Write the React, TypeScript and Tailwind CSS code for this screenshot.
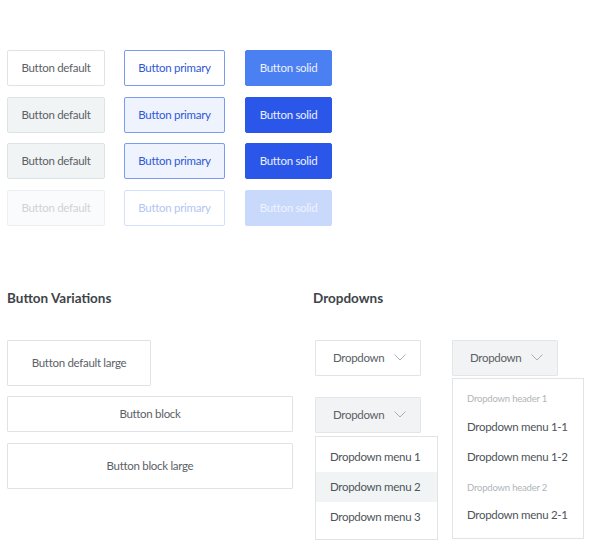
import React from 'react';

const font = { fontFamily: 'Lato, "Noto Sans", sans-serif' };

const Chevron = () => (
  <svg width="12" height="7" viewBox="0 0 12 7" fill="none" className="shrink-0">
    <path d="M0.5 0.5L6 6L11.5 0.5" stroke="#a9afb4" strokeWidth="1" />
  </svg>
);

const txt = 'text-[11.5px] tracking-[-0.3px] whitespace-nowrap';
const btnBase = `h-[36px] rounded-[2px] border flex items-center justify-center ${txt}`;

const rows = [
  {
    def: 'bg-white border-[#dfe3e6] text-[#5b6166]',
    pri: 'bg-white border-[#7b9bef] text-[#2f58d6]',
    sol: 'bg-[#4a80f2] border-[#4a80f2] text-[#eaf0fe]',
  },
  {
    def: 'bg-[#f1f4f5] border-[#dde2e5] text-[#5b6166]',
    pri: 'bg-[#eef3fd] border-[#7b9bef] text-[#2f58d6]',
    sol: 'bg-[#2a57e9] border-[#2a57e9] text-[#eaf0fe]',
  },
  {
    def: 'bg-[#f1f4f5] border-[#dde2e5] text-[#5b6166]',
    pri: 'bg-[#eef3fd] border-[#7b9bef] text-[#2f58d6]',
    sol: 'bg-[#2a57e9] border-[#2a57e9] text-[#eaf0fe]',
  },
  {
    def: 'bg-[#fafbfc] border-[#eceff1] text-[#cfd4d8]',
    pri: 'bg-white border-[#d3e0fb] text-[#b3c6f5]',
    sol: 'bg-[#c9d9fb] border-[#c9d9fb] text-[#eef3fe]',
  },
];

const Dropdown = ({ gray }: { gray?: boolean }) => (
  <div
    className={`w-[106px] h-[36px] border rounded-[1px] flex items-center pl-[17px] pr-[14px] justify-between text-[#5b6166] ${txt} ${
      gray ? 'bg-[#f1f3f4] border-[#e3e6e8]' : 'bg-white border-[#e1e4e6]'
    }`}
  >
    <span>Dropdown</span>
    <Chevron />
  </div>
);

const item = `flex items-center px-[14px] ${txt}`;
const header = 'flex items-center px-[14px] text-[9.5px] tracking-[-0.2px] text-[#b0b5b9] whitespace-nowrap';

export default function App() {
  return (
    <div className="w-[592px] h-[544px] bg-white overflow-hidden pl-[7px] pt-[50px]" style={font}>
      {/* button states grid */}
      <div className="flex flex-col gap-[10.5px]">
        {rows.map((r, i) => (
          <div key={i} className="flex">
            <div className={`${btnBase} w-[98px] ${r.def}`}>Button default</div>
            <div className={`${btnBase} w-[101px] ml-[19px] ${r.pri}`}>Button primary</div>
            <div className={`${btnBase} w-[87px] ml-[20px] ${r.sol}`}>Button solid</div>
          </div>
        ))}
      </div>

      <div className="flex mt-[64px]">
        {/* Button variations */}
        <div className="w-[286px] shrink-0 flex flex-col">
          <h2 className="text-[13.5px] font-bold text-[#3e4449] leading-[16px] h-[16px]">Button Variations</h2>
          <div className="mt-[34px] flex flex-col gap-[10.5px] text-[#5b6166]">
            <div className={`w-[144px] h-[46px] border border-[#dfe3e6] rounded-[1px] flex items-center justify-center ${txt}`}>
              Button default large
            </div>
            <div className={`h-[36px] border border-[#dfe3e6] rounded-[1px] flex items-center justify-center ${txt}`}>
              Button block
            </div>
            <div className={`h-[46px] border border-[#dfe3e6] rounded-[1px] flex items-center justify-center ${txt}`}>
              Button block large
            </div>
          </div>
        </div>

        {/* Dropdowns */}
        <div className="ml-[20px] shrink-0 flex flex-col">
          <h2 className="text-[13.5px] font-bold text-[#3e4449] leading-[16px] h-[16px]">Dropdowns</h2>
          <div className="mt-[34px] ml-[2px] flex gap-[14px]">
            <div className="flex flex-col">
              <Dropdown />
              <div className="mt-[21px]">
                <Dropdown gray />
              </div>
              <div className="mt-[3px] w-[123px] border border-[#e1e4e6] bg-white pt-[5px] pb-[7px] text-[#4e5459]">
                <div className={`${item} h-[30px]`}>Dropdown menu 1</div>
                <div className={`${item} h-[30px] bg-[#f1f4f5]`}>Dropdown menu 2</div>
                <div className={`${item} h-[30px]`}>Dropdown menu 3</div>
              </div>
            </div>
            <div className="flex flex-col">
              <Dropdown gray />
              <div className="mt-[2px] w-[132px] border border-[#e1e4e6] bg-white pt-[9px] pb-[10px] text-[#4e5459]">
                <div className={`${header} h-[24px]`}>Dropdown header 1</div>
                <div className={`${item} h-[30px]`}>Dropdown menu 1-1</div>
                <div className={`${item} h-[30px]`}>Dropdown menu 1-2</div>
                <div className={`${header} h-[30px] pt-[4px]`}>Dropdown header 2</div>
                <div className={`${item} h-[26px]`}>Dropdown menu 2-1</div>
              </div>
            </div>
          </div>
        </div>
      </div>
    </div>
  );
}
